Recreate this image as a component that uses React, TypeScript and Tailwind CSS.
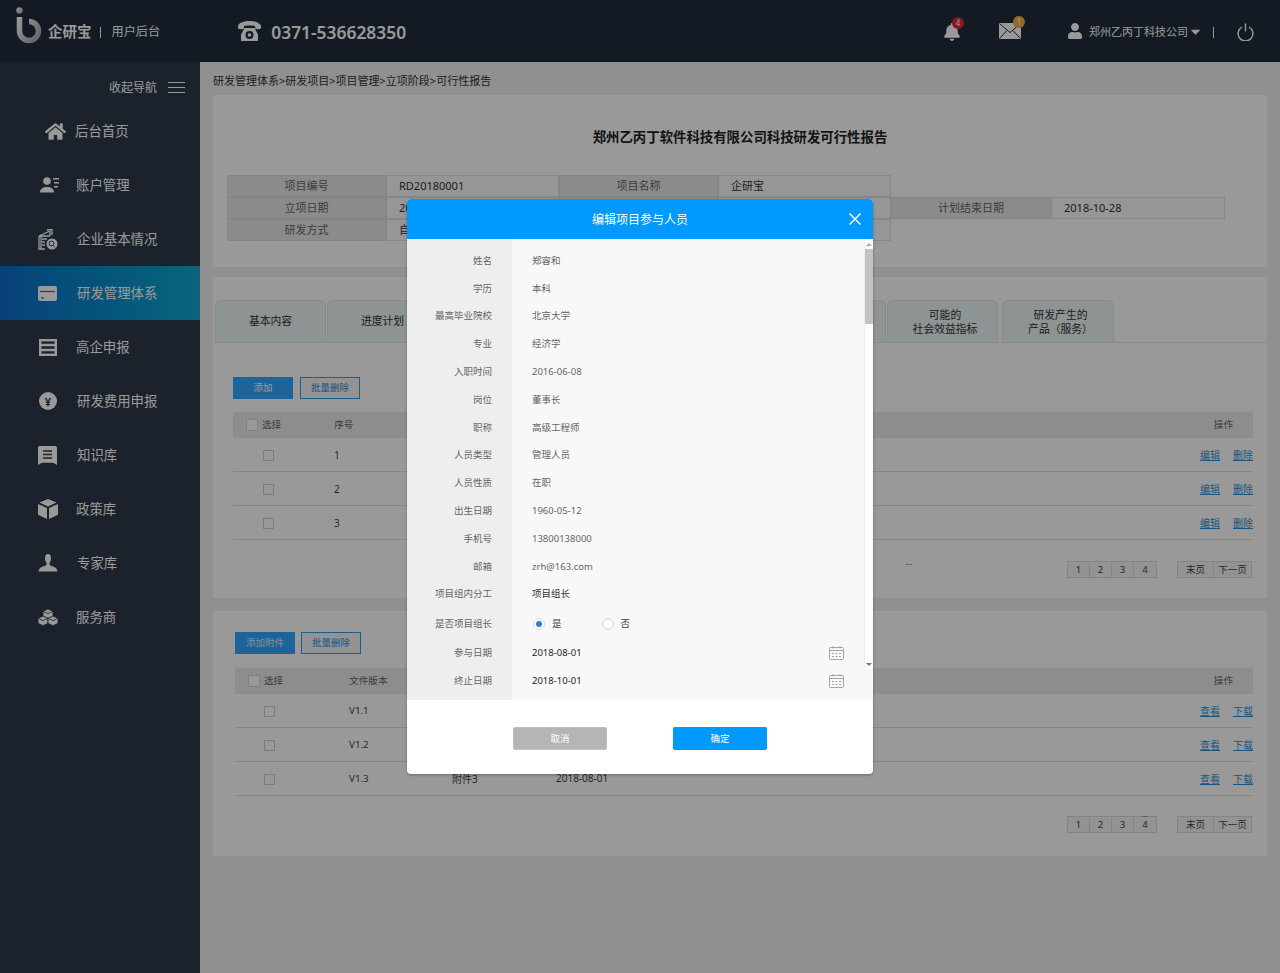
import React from "react";
import { FaHome, FaBell, FaUser, FaCaretDown } from "react-icons/fa";

const font = "font-['Noto_Sans','Noto_Sans_CJK_SC',sans-serif]";

const Logo = () => (
  <svg width="28" height="38" viewBox="0 0 28 38" className="shrink-0">
    <defs>
      <linearGradient id="lg" x1="0" y1="0" x2="1" y2="1">
        <stop offset="0" stopColor="#ffffff" />
        <stop offset="1" stopColor="#a8a8a8" />
      </linearGradient>
    </defs>
    <circle cx="4.5" cy="3.5" r="3.2" fill="url(#lg)" />
    <path d="M4.5 10v14a9.5 9.5 0 1 0 9.5-9.5" fill="none" stroke="url(#lg)" strokeWidth="5.5" />
  </svg>
);

const Phone = () => (
  <svg width="23" height="20" viewBox="0 0 23 20" fill="#fff" className="shrink-0">
    <path d="M11.5 0C6 0 1.5 1.5 0 4.5c-.3.8 0 3 .6 3.4l5 .3.5-3.2c1.8-.7 8.9-.7 10.8 0l.5 3.2 5-.3c.6-.4.9-2.6.6-3.4C21.5 1.5 17 0 11.5 0z" />
    <path fillRule="evenodd" d="M6.5 7h10l3.5 6.5V20H3v-6.5L6.5 7zm5 3a4 4 0 1 0 0 8 4 4 0 0 0 0-8zm0 2.2a1.8 1.8 0 1 1 0 3.6 1.8 1.8 0 0 1 0-3.6z" />
  </svg>
);

const Mail = () => (
  <svg width="22" height="16" viewBox="0 0 22 16" className="shrink-0">
    <rect x="0" y="0" width="22" height="16" fill="#fff" />
    <path d="M0.5 0.5 11 9.5 21.5 0.5M0.5 15.5 8 7.5M21.5 15.5 14 7.5" stroke="#222b39" strokeWidth="1" fill="none" />
  </svg>
);

const Power = () => (
  <svg width="17" height="18" viewBox="0 0 17 18" fill="none" stroke="#fff" strokeWidth="1.4" className="shrink-0">
    <path d="M5 4a7.4 7.4 0 1 0 7 0" />
    <path d="M8.5 0.5v8" />
  </svg>
);

const Burger = () => (
  <svg width="17" height="13" viewBox="0 0 17 13" stroke="#fff" strokeWidth="1" className="shrink-0">
    <path d="M0 1.5h17M0 6.5h17M0 11.5h17" />
  </svg>
);

const AccountIcon = () => (
  <svg width="20" height="16" viewBox="0 0 20 16" fill="#fff">
    <circle cx="7" cy="4" r="3.8" />
    <path d="M0 15.5c0-3.5 3-5 5-5.5h4c2 .5 5 2 5 5.5z" />
    <path d="M13 1h6v1.5h-6zM14 5h5v1.5h-5zM14 9h4v1.5h-4z" />
  </svg>
);

const CompanyIcon = () => (
  <svg width="20" height="21" viewBox="0 0 20 21" fill="none" stroke="#fff">
    <path d="M1 7l11-5v5M1 7v13h6M1 7h11M4 10h5M4 13h3M4 16h3M3 7v13" strokeWidth="1.3" />
    <path d="M9 1l5-1v6" strokeWidth="1.3" />
    <circle cx="14" cy="15" r="5.5" fill="#fff" stroke="none" />
    <circle cx="13.5" cy="14.5" r="2.4" stroke="#2d3949" strokeWidth="1" />
    <path d="M15 16.5l2 2" stroke="#2d3949" strokeWidth="1" />
  </svg>
);

const CardIcon = () => (
  <svg width="19" height="15" viewBox="0 0 19 15">
    <rect width="19" height="15" rx="2" fill="#fff" />
    <path d="M2 5.5h15" stroke="#1a7cb0" strokeWidth="1.2" />
    <path d="M3 12h3" stroke="#1a7cb0" strokeWidth="1.2" />
  </svg>
);

const ListIcon = () => (
  <svg width="18" height="17" viewBox="0 0 18 17" fill="none" stroke="#fff" strokeWidth="2.4">
    <rect x="1.2" y="1.2" width="15.6" height="14.6" />
    <path d="M1 6h16M1 11h16" />
  </svg>
);

const YenIcon = () => (
  <span className="w-[18px] h-[18px] rounded-full bg-white text-[#2d3949] flex items-center justify-center text-[11px] leading-none font-bold">¥</span>
);

const BookIcon = () => (
  <svg width="19" height="19" viewBox="0 0 19 19">
    <path d="M1.5 0h16A1.5 1.5 0 0 1 19 1.5V19l-4-2.2H4L0 19V1.5A1.5 1.5 0 0 1 1.5 0z" fill="#fff" />
    <path d="M5 5h9M5 8.5h9M5 12h9" stroke="#2d3949" strokeWidth="1.4" />
  </svg>
);

const CubeIcon = () => (
  <svg width="20" height="20" viewBox="0 0 20 20" fill="#fff">
    <path d="M10 0l8.5 3.5L10 7.5 1.5 3.5z" />
    <path d="M0 5l9 4v11l-7-3.2-2-1.3z" />
    <path d="M20 5l-9 4v11l7-3.2 2-1.3z" />
  </svg>
);

const ExpertIcon = () => (
  <svg width="20" height="18" viewBox="0 0 20 18" fill="#fff">
    <path d="M7 4.5C7 1.5 8 0 10 0s3 1.5 3 4.5c0 2-1 4-1.5 4.5v1.5L13 12c4 .8 6 2 6.5 5.5H0.5C1 14 3 12.8 7 12l1.5-1.500V9C8 8.500 7 6.500 7 4.500z" />
  </svg>
);

const ServiceIcon = () => (
  <svg width="20" height="17" viewBox="0 0 20 17" fill="#fff" stroke="#2d3949" strokeWidth="0.8">
    <path d="M10 0l5 2.3v5L10 9.500 5 7.300v-5z" />
    <path d="M5 7l5 2.300v5L5 16.700 0 14.300v-5z" />
    <path d="M15 7l5 2.300v5l-5 2.400-5-2.400v-5z" />
    <path d="M5 2.300l5 2.300 5-2.300M0 9.300l5 2.300 5-2.300 5 2.300 5-2.300" fill="none" />
  </svg>
);

const CalIcon = () => (
  <svg width="15" height="14" viewBox="0 0 15 14" fill="none" stroke="#a3a3a3" strokeWidth="1" className="shrink-0">
    <rect x="0.5" y="1.5" width="14" height="12" rx="1" />
    <path d="M0.5 4.5h14M4 0v2.5M11 0v2.5" />
    <path d="M3 7.5h2M6.5 7.5h2M10 7.5h2M3 10.5h2M6.5 10.5h2M10 10.5h2" />
  </svg>
);

const menu = [
  { t: "后台首页", i: <FaHome size={21} color="#fff" />, c: "ml-[45px] mr-[9px] w-[21px]" },
  { t: "账户管理", i: <AccountIcon />, c: "ml-[40px] mr-[16px] w-[20px]" },
  { t: "企业基本情况", i: <CompanyIcon />, c: "ml-[38px] mr-[19px] w-[20px]" },
  { t: "研发管理体系", i: <CardIcon />, c: "ml-[38px] mr-[20px] w-[19px]", active: true },
  { t: "高企申报", i: <ListIcon />, c: "ml-[39px] mr-[19px] w-[18px]" },
  { t: "研发费用申报", i: <YenIcon />, c: "ml-[39px] mr-[20px] w-[18px]" },
  { t: "知识库", i: <BookIcon />, c: "ml-[38px] mr-[20px] w-[19px]" },
  { t: "政策库", i: <CubeIcon />, c: "ml-[38px] mr-[18px] w-[20px]" },
  { t: "专家库", i: <ExpertIcon />, c: "ml-[38px] mr-[19px] w-[20px]" },
  { t: "服务商", i: <ServiceIcon />, c: "ml-[38px] mr-[18px] w-[20px]" },
];

const Header = () => (
  <header className="h-[62px] shrink-0 bg-[#222c3b] flex items-center text-white">
    <div className="ml-[15px] mt-[-10px]"><Logo /></div>
    <span className="ml-[5px] mt-[2px] text-[14.5px] font-bold">企研宝</span>
    <span className="ml-[8px] mt-[2px] w-px h-[11px] bg-white" />
    <span className="ml-[11px] mt-[3px] text-[12.2px]">用户后台</span>
    <span className="ml-[78px]"><Phone /></span>
    <span className="ml-[10px] mt-[3px] text-[17.4px] font-semibold">0371-536628350</span>
    <div className="ml-auto flex items-center">
      <span className="relative mt-[1px] text-white"><FaBell size={18} />
        <span className="absolute left-[9px] top-[-6px] w-[12px] h-[12px] rounded-full bg-[#e0283f] text-[8px] leading-[12px] text-center">4</span>
      </span>
      <span className="relative ml-[38px]"><Mail />
        <span className="absolute left-[14px] top-[-7px] w-[12px] h-[12px] rounded-full bg-[#f0b040] text-[8px] leading-[12px] text-center">1</span>
      </span>
      <span className="ml-[46px]"><FaUser size={16} /></span>
      <span className="ml-[6px] mt-[2px] text-[11px]">郑州乙丙丁科技公司</span>
      <span className="mt-[1px]"><FaCaretDown size={15} /></span>
      <span className="ml-[10px] mt-[2px] w-px h-[11px] bg-white" />
      <span className="ml-[23px] mr-[26px] mt-[2px]"><Power /></span>
    </div>
  </header>
);

const Sidebar = () => (
  <aside className="w-[200px] shrink-0 bg-[#2d3949] text-white">
    <div className="h-[42px] pt-[16px] pr-[15px] flex items-start justify-end gap-[11px] text-[12px] leading-[20px]">
      <span>收起导航</span>
      <span className="mt-[3px]"><Burger /></span>
    </div>
    {menu.map((m) => (
      <div key={m.t} className={`h-[54px] flex items-center text-[13.4px] ${m.active ? "bg-gradient-to-r from-[#0e6ec8] to-[#10a8d0] text-white" : ""}`}>
        <span className={`flex justify-center shrink-0 ${m.c}`}>{m.i}</span>
        <span>{m.t}</span>
      </div>
    ))}
  </aside>
);

const infoCols = "grid grid-cols-[159px_173px_159px_173px_160px_174px] ml-[14px] text-[11px] text-[#333]";
const L = ({ children }: { children?: React.ReactNode }) => (
  <div className="h-[22px] pt-px bg-[#e8e8e8] border border-[#dedede] flex items-center justify-center text-[#666]">{children}</div>
);
const V = ({ children }: { children?: React.ReactNode }) => (
  <div className="h-[22px] pt-px bg-[#fafafa] border border-[#e2e2e2] flex items-center pl-[12px]">{children}</div>
);

const Box = () => <span className="block w-[11px] h-[11px] border border-[#cfcfcf] bg-white" />;

const Pager = ({ dots }: { dots?: boolean }) => (
  <div className="relative flex justify-end items-start text-[9.5px] text-[#444] gap-[20px] mr-[1px]">
    {dots && <span className="absolute right-[104px] top-[-8px] text-[8px] leading-[12px] text-[#444]">...</span>}
    <div className="flex border border-[#dcdcdc] h-[17px] pt-px bg-[#f5f5f5]">
      {[1, 2, 3, 4].map((n) => (
        <span key={n} className="w-[22px] flex items-center justify-center border-r border-[#dcdcdc] last:border-r-0">{n}</span>
      ))}
    </div>
    <div className="flex border border-[#dcdcdc] h-[17px] pt-px bg-[#f5f5f5]">
      <span className="w-[36px] flex items-center justify-center border-r border-[#dcdcdc]">末页</span>
      <span className="w-[37px] flex items-center justify-center">下一页</span>
    </div>
  </div>
);

const tabs = ["基本内容", "进度计划", "", "", "", ""];

const Row1 = ({ n }: { n: number }) => (
  <div className="h-[34px] flex items-center border-b border-[#e0e0e0] text-[10px] text-[#444]">
    <span className="ml-[30px] mt-[1px]"><Box /></span>
    <span className="ml-[60px] mt-[2px] w-[100px]">{n}</span>
    <span className="ml-auto mt-[2px] flex gap-[13px] text-[#2a8fd8] underline text-[10px]"><a>编辑</a><a>删除</a></span>
  </div>
);
const Row2 = ({ v, n, d }: { v: string; n?: string; d?: string }) => (
  <div className="h-[34px] flex items-center border-b border-[#e0e0e0] text-[10px] text-[#444]">
    <span className="ml-[29px] mt-[1px]"><Box /></span>
    <span className="ml-[74px] mt-[2px] w-[103px] text-[9.8px]">{v}</span>
    <span className="w-[104px] mt-[1px]">{n}</span>
    <span>{d}</span>
    <span className="ml-auto mt-[1px] flex gap-[13px] text-[#2a8fd8] underline"><a>查看</a><a>下载</a></span>
  </div>
);

const Main = () => (
  <main className="flex-1 min-w-0 bg-[#f0f0f0] pl-[13px] pr-[13px]">
    <div className="h-[33px] pt-[12px] text-[11px] leading-[14px] text-[#333]">研发管理体系&gt;研发项目&gt;项目管理&gt;立项阶段&gt;可行性报告</div>
    <section className="h-[172px] bg-white">
      <h1 className="pt-[32px] h-[80px] text-center text-[13.4px] leading-[20px] font-bold text-[#222]">郑州乙丙丁软件科技有限公司科技研发可行性报告</h1>
      <div className={infoCols}>
        <L>项目编号</L><V>RD20180001</V><L>项目名称</L><V>企研宝</V><div /><div />
        <L>立项日期</L><V>2018-08-01</V><L /><V /><L>计划结束日期</L><V>2018-10-28</V>
        <L>研发方式</L><V>自主研发</V><L /><V /><div /><div />
      </div>
    </section>
    <section className="mt-[10px] h-[321px] bg-white pt-[23px]">
      <div className="flex items-end h-[43px] border-b border-[#e4ecec] pl-[2px] text-[10.8px] text-[#333] leading-[14px]">
        {tabs.map((t, i) => (
          <div key={i} className="w-[111px] mr-px h-[42px] pb-[2px] rounded-t-[6px] bg-[#edf5f5] border border-b-0 border-[#e0e8e8] flex items-center justify-center shrink-0">{t}</div>
        ))}
        <div className="w-[111px] mr-[4px] h-[42px] pl-[5px] rounded-t-[6px] bg-[#edf5f5] border border-b-0 border-[#e0e8e8] flex items-center justify-center text-center shrink-0">可能的<br />社会效益指标</div>
        <div className="w-[112px] h-[42px] pl-[5px] rounded-t-[6px] bg-[#edf5f5] border border-b-0 border-[#e0e8e8] flex items-center justify-center text-center shrink-0">研发产生的<br />产品（服务）</div>
      </div>
      <div className="ml-[20px] mr-[14px]">
        <div className="mt-[34px] flex gap-[7px] text-[9.5px]">
          <button className="w-[60px] h-[22px] bg-[#2fa7ff] border border-[#2fa7ff] text-white">添加</button>
          <button className="w-[60px] h-[22px] border border-[#2f9fe8] text-[#2a8fd8] bg-[#f5f5f5]">批量删除</button>
        </div>
        <div className="mt-[13px] h-[26px] pt-px bg-[#ececec] flex items-center text-[9.6px] text-[#666]">
          <span className="ml-[13px] mt-[-2px]"><span className="block w-[12px] h-[12px] border border-[#d8d8d8] bg-white" /></span>
          <span className="ml-[4px]">选择</span>
          <span className="ml-[53px]">序号</span>
          <span className="ml-auto mr-[20px]">操作</span>
        </div>
        <Row1 n={1} /><Row1 n={2} /><Row1 n={3} />
        <div className="relative mt-[21px]">
          <span className="absolute left-[672px] top-[-6px] text-[9px] text-[#444]">...</span>
          <Pager />
        </div>
      </div>
    </section>
    <section className="mt-[13px] h-[245px] bg-white pt-[21px] pl-[22px] pr-[14px]">
      <div className="flex gap-[6px] text-[9.5px]">
        <button className="w-[60px] h-[22px] bg-[#2fa7ff] border border-[#2fa7ff] text-white/80">添加附件</button>
        <button className="w-[60px] h-[22px] border border-[#2f9fe8] text-[#2a8fd8] bg-[#f5f5f5]">批量删除</button>
      </div>
      <div className="mt-[14px] h-[26px] pt-px bg-[#ececec] flex items-center text-[9.6px] text-[#666]">
        <span className="ml-[13px] mt-[-2px]"><span className="block w-[12px] h-[12px] border border-[#d8d8d8] bg-white" /></span>
        <span className="ml-[4px]">选择</span>
        <span className="ml-[66px]">文件版本</span>
        <span className="ml-auto mr-[20px]">操作</span>
      </div>
      <Row2 v="V1.1" />
      <Row2 v="V1.2" />
      <Row2 v="V1.3" n="附件3" d="2018-08-01" />
      <div className="mt-[20px]"><Pager dots /></div>
    </section>
  </main>
);

const fields: [string, string][] = [
  ["姓名", "郑容和"],
  ["学历", "本科"],
  ["最高毕业院校", "北京大学"],
  ["专业", "经济学"],
  ["入职时间", "2016-06-08"],
  ["岗位", "董事长"],
  ["职称", "高级工程师"],
  ["人员类型", "管理人员"],
  ["人员性质", "在职"],
  ["出生日期", "1960-05-12"],
  ["手机号", "13800138000"],
  ["邮箱", "zrh@163.com"],
];

const FormRow = ({ label, children, tall }: { label: string; children: React.ReactNode; tall?: boolean }) => (
  <div className={`flex items-center ${tall ? "h-[31px]" : "h-[27.8px]"}`}>
    <div className="w-[85px] text-right text-[9.5px] text-[#666] shrink-0">{label}</div>
    <div className="ml-[40px] flex-1 min-w-0 flex items-center text-[9.5px]">{children}</div>
  </div>
);

const Modal = () => (
  <div className="absolute left-[407px] top-[199px] w-[466px] h-[575px] bg-white rounded-[4px] overflow-hidden shadow-[0_1px_3px_rgba(0,0,0,0.3)]">
    <div className="h-[40px] pt-[1px] bg-[#0099ff] relative flex items-center justify-center text-white text-[12px]">
      编辑项目参与人员
      <svg width="12" height="12" viewBox="0 0 12 12" stroke="#fff" strokeWidth="1.5" className="absolute right-[12px] top-[14px]">
        <path d="M0.5 0.5l11 11M11.5 0.5l-11 11" />
      </svg>
    </div>
    <div className="relative h-[461px] bg-gradient-to-r from-[#eeeeee] from-[105px] to-[#f8f8f8] to-[105px] pt-[8px]">
      {fields.map(([a, b]) => (
        <FormRow key={a} label={a}><span className="text-[#666]">{b}</span></FormRow>
      ))}
      <FormRow label="项目组内分工"><span className="text-[#333]">项目组长</span></FormRow>
      <FormRow label="是否项目组长" tall>
        <span className="w-[12px] h-[12px] rounded-full border border-[#ddd] bg-white flex items-center justify-center ml-px"><span className="w-[6px] h-[6px] rounded-full bg-[#2a80d8]" /></span>
        <span className="ml-[7px] text-[#444]">是</span>
        <span className="ml-[40px] w-[12px] h-[12px] rounded-full border border-[#ccc] bg-white" />
        <span className="ml-[7px] text-[#444]">否</span>
      </FormRow>
      <FormRow label="参与日期">
        <span className="text-[#222]">2018-08-01</span>
        <span className="ml-auto mr-[29px]"><CalIcon /></span>
      </FormRow>
      <FormRow label="终止日期">
        <span className="text-[#222]">2018-10-01</span>
        <span className="ml-auto mr-[29px]"><CalIcon /></span>
      </FormRow>
      <div className="absolute right-0 top-0 w-[9px] h-[430px] bg-[#fcfcfc] border-l border-[#eeeeee]">
        <div className="h-[10px] flex items-center justify-center"><span className="border-x-[3px] border-x-transparent border-b-[3px] border-b-[#aaa]" /></div>
        <div className="h-[75px] bg-[#c2c2c2]" />
        <div className="absolute bottom-0 left-0 w-full h-[10px] flex items-center justify-center"><span className="border-x-[3px] border-x-transparent border-t-[3px] border-t-[#777]" /></div>
      </div>
    </div>
    <div className="h-[74px] flex justify-center items-start pt-[27px] gap-[66px] text-[9.5px] text-white">
      <button className="w-[94px] h-[23px] pt-px rounded-[2px] bg-[#b5b5b5] border border-[#c0c0c0]">取消</button>
      <button className="w-[94px] h-[23px] pt-px rounded-[2px] bg-[#0099ff]">确定</button>
    </div>
  </div>
);

export default function App() {
  return (
    <div className={`relative h-[973px] overflow-hidden flex flex-col ${font}`}>
      <Header />
      <div className="flex flex-1 min-h-0">
        <Sidebar />
        <Main />
      </div>
      <div className="absolute inset-0 bg-black/40">
        <Modal />
      </div>
    </div>
  );
}
